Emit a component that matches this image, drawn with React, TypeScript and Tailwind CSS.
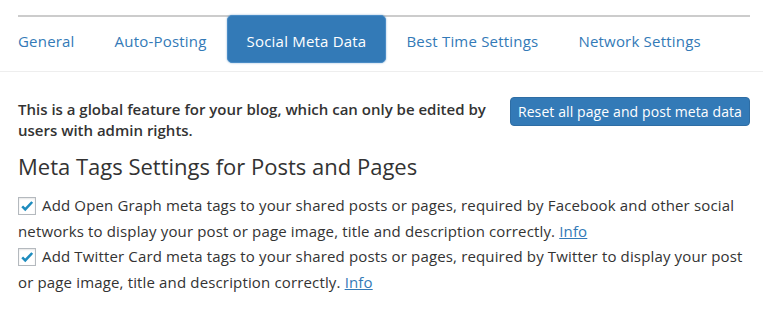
import React from "react";

const tabs = ["General", "Auto-Posting", "Social Meta Data", "Best Time Settings", "Network Settings"];

function Check() {
  return (
    <span className="inline-flex items-center justify-center w-[18px] h-[18px] mr-[6px] align-[-3px] bg-white border border-[#b4b9be] shadow-[inset_0_1px_2px_rgba(0,0,0,0.1)]">
      <svg viewBox="0 0 20 20" className="w-[16px] h-[16px]">
        <path d="M4 10.5l3.8 3.8L16.5 5" fill="none" stroke="#1e8cbe" strokeWidth="3.2" />
      </svg>
    </span>
  );
}

export default function App() {
  return (
    <div className="w-[763px] h-[315px] bg-white text-[#333] font-['Open_Sans',sans-serif] pt-[15px]">
      {/* Tabs */}
      <div className="border-b border-[#eee] pb-2">
        <div className="ml-[18px] mr-[13px] border-t-2 border-[#ccc] flex text-[15px] tracking-[0.2px]">
          {tabs.map((t, i) => {
            const active = t === "Social Meta Data";
            return (
              <div
                key={t}
                className={
                  active
                    ? "-mt-[2px] h-[48px] px-[19px] pt-[4px] flex items-center rounded-[5px] bg-[#337ab7] border border-[#4a8cc6] text-white shadow-[0_0_2px_rgba(51,122,183,0.6)]"
                    : i === 0
                    ? "-mt-[2px] h-[48px] pr-5 pt-[4px] flex items-center text-[#337ab7]"
                    : "-mt-[2px] h-[48px] px-5 pt-[4px] flex items-center text-[#337ab7]"
                }
              >
                {t}
              </div>
            );
          })}
        </div>
      </div>

      <div className="pl-[18px] pr-[13px]">
        {/* Notice */}
        <div className="flex items-start justify-between mt-[27px]">
          <p className="w-[484px] text-[15px] leading-[21px] font-semibold">
            This is a global feature for your blog, which can only be edited by users with admin rights.
          </p>
          <button className="shrink-0 whitespace-nowrap -mt-[2px] h-[29px] px-[7px] rounded-[4px] bg-[#337ab7] border border-[#2e6da4] text-white text-[14px] tracking-[0.1px]">
            Reset all page and post meta data
          </button>
        </div>

        <h2 className="mt-[10px] text-[22px] leading-[30px]">Meta Tags Settings for Posts and Pages</h2>

        <div className="mt-[12px] pr-[5px] text-[15px] leading-[25.5px] tracking-[0.15px]">
          <p>
            <Check />
            Add Open Graph meta tags to your shared posts or pages, required by Facebook and other social networks to
            display your post or page image, title and description correctly.{" "}
            <a className="text-[#337ab7] underline">Info</a>
          </p>
          <p>
            <Check />
            Add Twitter Card meta tags to your shared posts or pages, required by Twitter to display your post or page
            image, title and description correctly. <a className="text-[#337ab7] underline">Info</a>
          </p>
        </div>
      </div>
    </div>
  );
}
